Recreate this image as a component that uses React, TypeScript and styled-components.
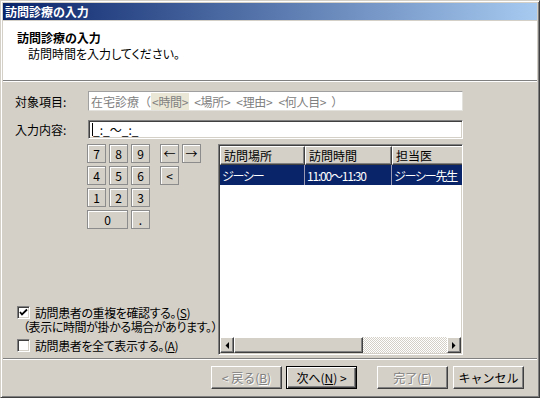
import React from "react";
import styled, { createGlobalStyle, css } from "styled-components";

const face = "#d4d0c8";
const shadow = "#808080";
const darkShadow = "#404040";
const highlight = "#ffffff";
const navy = "#0a246a";

const GlobalStyle = createGlobalStyle`
  html, body {
    margin: 0;
    padding: 0;
    background: ${face};
  }
  body {
    font-family: "Noto Sans CJK JP", "Liberation Sans", sans-serif;
    font-size: 12px;
    font-feature-settings: "palt";
    color: #000;
  }
  * {
    box-sizing: border-box;
  }
`;

const raised = css`
  border: 1px solid;
  border-color: ${highlight} ${darkShadow} ${darkShadow} ${highlight};
  box-shadow: inset -1px -1px ${shadow}, inset 1px 1px ${face};
`;

const sunken = css`
  border: 1px solid;
  border-color: ${shadow} ${highlight} ${highlight} ${shadow};
  box-shadow: inset 1px 1px ${darkShadow}, inset -1px -1px ${face};
`;

const Window = styled.div`
  width: 540px;
  height: 398px;
  padding: 2px;
  display: flex;
  flex-direction: column;
  background: ${face};
  border: 1px solid;
  border-color: ${face} ${darkShadow} ${darkShadow} ${face};
  box-shadow: inset 1px 1px ${highlight}, inset -1px -1px ${shadow};
`;

const TitleBar = styled.div`
  height: 17px;
  margin-bottom: 1px;
  padding-left: 2px;
  display: flex;
  align-items: center;
  background: linear-gradient(to right, ${navy}, #a6caf0);
  color: #fff;
  font-weight: bold;
  line-height: 1;
`;

const Header = styled.header`
  height: 59px;
  padding: 9px 0 0 14px;
  background: #fff;
  line-height: 16px;
`;

const HeaderTitle = styled.div`
  font-weight: bold;
`;

const HeaderSub = styled.div`
  padding-left: 11px;
`;

const Etched = styled.div`
  height: 2px;
  border-top: 1px solid ${shadow};
  border-bottom: 1px solid ${highlight};
`;

const Body = styled.main`
  flex: 1;
  padding: 9px 12px 0 12px;
  display: flex;
  flex-direction: column;
`;

const FieldRow = styled.div<{ $gap: number }>`
  display: flex;
  align-items: center;
  margin-bottom: ${(p) => p.$gap}px;
`;

const FieldLabel = styled.label`
  width: 73px;
  flex-shrink: 0;
`;

const TargetBox = styled.div`
  width: 375px;
  height: 20px;
  padding-left: 2px;
  display: flex;
  align-items: center;
  background: #fff;
  border: 1px solid;
  border-color: #a0a0a0 #e4e2dc #e4e2dc #a0a0a0;
  color: ${shadow};
  white-space: nowrap;
  font-feature-settings: normal;
`;

const Tag = styled.span<{ $active?: boolean }>`
  background: ${(p) => (p.$active ? "#ebe7d6" : "transparent")};
  padding: 0 1px;
  margin-right: 4px;
  letter-spacing: -0.3px;
`;

const InputBox = styled.div`
  width: 375px;
  height: 19px;
  padding-left: 3px;
  display: flex;
  align-items: center;
  background: #fff;
  ${sunken};
  white-space: nowrap;
`;

const Caret = styled.span`
  width: 1px;
  height: 13px;
  background: #000;
`;

const Middle = styled.div`
  display: flex;
  height: 211px;
`;

const LeftCol = styled.div`
  width: 203px;
  flex-shrink: 0;
  display: flex;
  flex-direction: column;
`;

const Keypad = styled.div`
  margin-left: 72px;
  display: grid;
  grid-template-columns: 19px 19px 19px 4px 19px 19px;
  grid-template-rows: repeat(4, 19px);
  gap: 3px;
`;

const Key = styled.button<{ $col: number; $row: number; $span?: number }>`
  grid-column: ${(p) => p.$col} / span ${(p) => p.$span ?? 1};
  grid-row: ${(p) => p.$row};
  padding: 0;
  font-family: inherit;
  font-size: 12px;
  color: #000;
  background: ${face};
  border: 1px solid #8c8c8c;
  box-shadow: inset 1px 1px ${highlight};
  display: flex;
  align-items: center;
  justify-content: center;
`;

const Options = styled.div`
  margin-top: auto;
  padding: 0 0 2px 2px;
  line-height: 13px;
  white-space: nowrap;
  letter-spacing: -0.4px;
`;

const CheckRow = styled.label`
  display: flex;
  align-items: center;
  gap: 5px;
  height: 16px;
`;

const CheckBox = styled.span`
  width: 13px;
  height: 13px;
  flex-shrink: 0;
  background: #fff;
  ${sunken};
  display: flex;
  align-items: center;
  justify-content: center;
`;

const Note = styled.div`
  height: 13px;
  margin: 0 0 4px 6px;
`;

const Accel = styled.u`
  text-decoration: underline;
`;

const TablePane = styled.div`
  width: 245px;
  height: 211px;
  background: #fff;
  ${sunken};
  padding: 1px;
  display: flex;
  flex-direction: column;
  overflow: hidden;
`;

const HeaderRow = styled.div`
  display: flex;
  height: 19px;
  flex-shrink: 0;
`;

const HeadCell = styled.div<{ $w: number }>`
  width: ${(p) => p.$w}px;
  flex-shrink: 0;
  padding-left: 3px;
  display: flex;
  align-items: center;
  background: ${face};
  ${raised};
  white-space: nowrap;
`;

const DataRow = styled.div`
  display: flex;
  height: 20px;
  flex-shrink: 0;
`;

const DataCell = styled.div<{ $w: number }>`
  width: ${(p) => p.$w}px;
  flex-shrink: 0;
  padding-left: 2px;
  display: flex;
  align-items: center;
  background: ${navy};
  color: #fff;
  border-right: 1px solid #9a9ab4;
  white-space: nowrap;
  letter-spacing: -1.2px;
`;

const Filler = styled.div`
  flex: 1;
`;

const ScrollBar = styled.div`
  height: 16px;
  flex-shrink: 0;
  display: flex;
`;

const ScrollArrow = styled.div`
  width: 14px;
  background: ${face};
  ${raised};
  display: flex;
  align-items: center;
  justify-content: center;
`;

const ScrollThumb = styled.div`
  width: 129px;
  background: ${face};
  ${raised};
`;

const ScrollTrack = styled.div`
  flex: 1;
  background: repeating-conic-gradient(#fff 0 25%, ${face} 0 50%) 0 0 / 2px 2px;
`;

const Footer = styled.footer`
  height: 37px;
  display: flex;
  flex-direction: column;
`;

const ButtonRow = styled.div`
  display: flex;
  justify-content: flex-end;
  padding: 6px 13px 0 0;
`;

const PushButton = styled.button<{ $default?: boolean; $gap?: number }>`
  width: 71px;
  height: 23px;
  margin-left: ${(p) => p.$gap ?? 0}px;
  padding: 0;
  font-family: inherit;
  font-size: 12px;
  background: ${face};
  color: ${(p) => (p.disabled ? shadow : "#000")};
  text-shadow: ${(p) => (p.disabled ? `1px 1px ${highlight}` : "none")};
  ${(p) =>
    p.$default
      ? css`
          border: 1px solid #000;
          box-shadow: inset 1px 1px ${highlight}, inset -1px -1px ${darkShadow},
            inset -2px -2px ${shadow};
        `
      : raised};
`;

function Arrow({ dir }: { dir: "left" | "right" }) {
  return (
    <svg width="4" height="7" viewBox="0 0 4 7">
      {dir === "left" ? (
        <polygon points="4,0 4,7 0.5,3.5" fill="#000" />
      ) : (
        <polygon points="0,0 0,7 3.5,3.5" fill="#000" />
      )}
    </svg>
  );
}

function Check() {
  return (
    <svg width="9" height="9" viewBox="0 0 9 9">
      <polyline
        points="1,4 3,6.5 8,1.5"
        fill="none"
        stroke="#000"
        strokeWidth="1.8"
      />
    </svg>
  );
}

const keys = [
  { label: "7", col: 1, row: 1 },
  { label: "8", col: 2, row: 1 },
  { label: "9", col: 3, row: 1 },
  { label: "←", col: 5, row: 1 },
  { label: "→", col: 6, row: 1 },
  { label: "4", col: 1, row: 2 },
  { label: "5", col: 2, row: 2 },
  { label: "6", col: 3, row: 2 },
  { label: "<", col: 5, row: 2 },
  { label: "1", col: 1, row: 3 },
  { label: "2", col: 2, row: 3 },
  { label: "3", col: 3, row: 3 },
  { label: "0", col: 1, row: 4, span: 2 },
  { label: ".", col: 3, row: 4 },
];

const columns = [
  { title: "訪問場所", w: 85, value: "ジーシー" },
  { title: "訪問時間", w: 87, value: "11:00〜11:30" },
  { title: "担当医", w: 87, value: "ジーシー先生" },
];

export default function App() {
  return (
    <>
      <GlobalStyle />
      <Window>
        <TitleBar>訪問診療の入力</TitleBar>
        <Header>
          <HeaderTitle>訪問診療の入力</HeaderTitle>
          <HeaderSub>訪問時間を入力してください。</HeaderSub>
        </Header>
        <Etched />
        <Body>
          <FieldRow $gap={9}>
            <FieldLabel>対象項目:</FieldLabel>
            <TargetBox>
              <span>在宅診療（</span>
              <Tag $active>&lt;時間&gt;</Tag>
              <Tag>&lt;場所&gt;</Tag>
              <Tag>&lt;理由&gt;</Tag>
              <Tag>&lt;何人目&gt;</Tag>
              <span>）</span>
            </TargetBox>
          </FieldRow>
          <FieldRow $gap={5}>
            <FieldLabel>入力内容:</FieldLabel>
            <InputBox>
              <Caret />
              _:_〜_:_
            </InputBox>
          </FieldRow>
          <Middle>
            <LeftCol>
              <Keypad>
                {keys.map((k) => (
                  <Key key={k.label} $col={k.col} $row={k.row} $span={k.span}>
                    {k.label}
                  </Key>
                ))}
              </Keypad>
              <Options>
                <CheckRow>
                  <CheckBox>
                    <Check />
                  </CheckBox>
                  <span>
                    訪問患者の重複を確認する。(<Accel>S</Accel>)
                  </span>
                </CheckRow>
                <Note>（表示に時間が掛かる場合があります。）</Note>
                <CheckRow>
                  <CheckBox />
                  <span>
                    訪問患者を全て表示する。(<Accel>A</Accel>)
                  </span>
                </CheckRow>
              </Options>
            </LeftCol>
            <TablePane>
              <HeaderRow>
                {columns.map((c) => (
                  <HeadCell key={c.title} $w={c.w}>
                    {c.title}
                  </HeadCell>
                ))}
              </HeaderRow>
              <DataRow>
                {columns.map((c) => (
                  <DataCell key={c.title} $w={c.w}>
                    {c.value}
                  </DataCell>
                ))}
              </DataRow>
              <Filler />
              <ScrollBar>
                <ScrollArrow>
                  <Arrow dir="left" />
                </ScrollArrow>
                <ScrollThumb />
                <ScrollTrack />
                <ScrollArrow>
                  <Arrow dir="right" />
                </ScrollArrow>
              </ScrollBar>
            </TablePane>
          </Middle>
        </Body>
        <Footer>
          <Etched />
          <ButtonRow>
            <PushButton disabled>
              &lt; 戻る(<Accel>B</Accel>)
            </PushButton>
            <PushButton $default $gap={4}>
              次へ(<Accel>N</Accel>) &gt;
            </PushButton>
            <PushButton disabled $gap={20}>
              完了(<Accel>F</Accel>)
            </PushButton>
            <PushButton $gap={5}>キャンセル</PushButton>
          </ButtonRow>
        </Footer>
      </Window>
    </>
  );
}
